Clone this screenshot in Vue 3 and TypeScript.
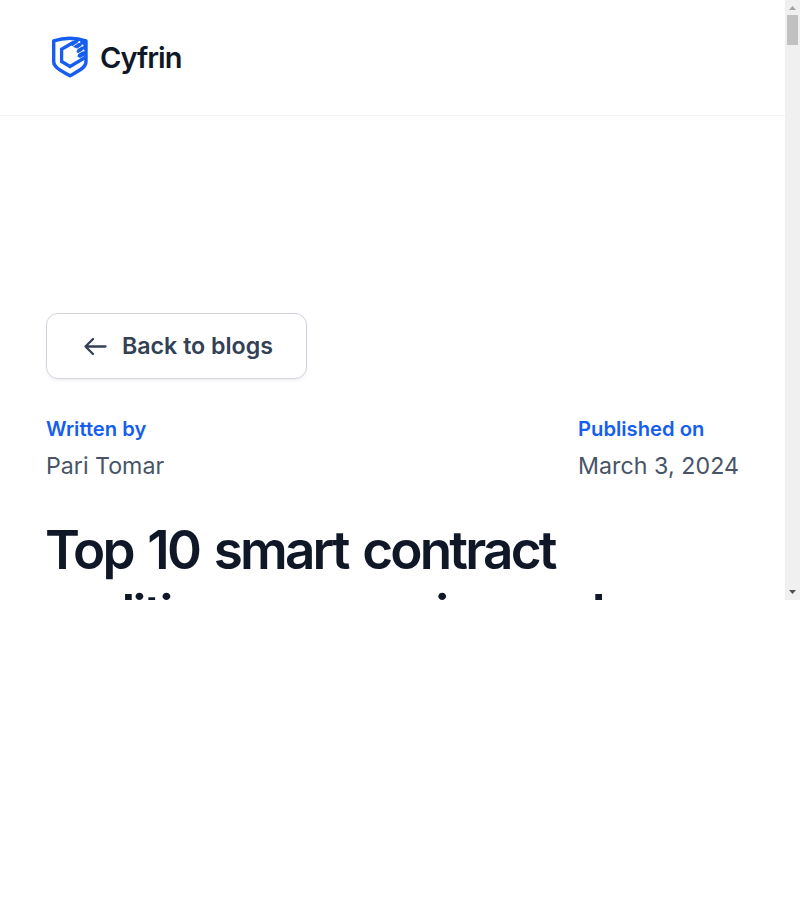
<script setup lang="ts">
interface Meta {
  label: string
  value: string
}

const author: Meta = { label: 'Written by', value: 'Pari Tomar' }
const published: Meta = { label: 'Published on', value: 'March 3, 2024' }
</script>

<template>
  <div class="viewport">
    <div class="page">
      <header class="header">
        <a class="brand">
          <svg class="shield" width="36" height="42" viewBox="0 0 36 42" fill="none">
            <path d="M1.7 4.8Q18 -.4 34 4.8V25.5C34 31.5 28 34 18 39.8C8 34 1.7 31.5 1.7 25.5Z" stroke="#155eef" stroke-width="3.4" stroke-linejoin="round" />
            <path d="M22 6L9.6 13.3V25.5L18 30.5L34 21" stroke="#155eef" stroke-width="3.3" />
            <path d="M17.5 8L25 2.5L35 4V18.2L28 22L25.3 20.5L26.5 17.5L24.5 16L25.5 12.7L21.5 11Z" fill="#155eef" />
            <path d="M19.5 11.2L27.3 6M24 13.8L30.5 9.6M25 18.2L31.5 14.5" stroke="#fff" stroke-width="0.9" />
            <circle cx="27.3" cy="6" r="1.1" fill="#fff" />
            <circle cx="30.5" cy="9.6" r="1.1" fill="#fff" />
            <circle cx="31.5" cy="14.5" r="1" fill="#fff" />
          </svg>
          <span class="brand-name">Cyfrin</span>
        </a>
      </header>
      <main class="content">
        <a class="back">
          <svg width="24" height="20" viewBox="0 0 24 20" fill="none">
            <path d="M22.5 10.5H2.5M10 3L2.5 10.5L10 18" stroke="#344054" stroke-width="2.3" stroke-linecap="round" stroke-linejoin="round" />
          </svg>
          <span>Back to blogs</span>
        </a>
        <div class="meta">
          <div class="meta-item">
            <span class="label">{{ author.label }}</span>
            <span class="value">{{ author.value }}</span>
          </div>
          <div class="meta-item">
            <span class="label">{{ published.label }}</span>
            <span class="value date">{{ published.value }}</span>
          </div>
        </div>
        <h1 class="title">
          <span class="line first">Top 10 smart contract</span>
          <span class="line second">auditing companies and</span>
        </h1>
      </main>
    </div>
    <div class="scrollbar">
      <svg class="up" width="15" height="15"><path d="M4 10L7.5 6L11 10Z" fill="#a3a3a3" /></svg>
      <div class="thumb"></div>
      <svg class="down" width="15" height="15"><path d="M4 5L7.5 9L11 5Z" fill="#505050" /></svg>
    </div>
  </div>
</template>

<style>
body {
  margin: 0;
  background: #fff;
}
</style>

<style scoped>
.viewport {
  display: flex;
  width: 800px;
  height: 600px;
  overflow: hidden;
  font-family: Inter, sans-serif;
}
.page {
  width: 785px;
  overflow: hidden;
}
.header {
  box-sizing: border-box;
  height: 116px;
  padding: 36px 0 0 52px;
  border-bottom: 1px solid #f2f4f7;
}
.brand {
  display: flex;
  height: 42px;
  gap: 12px;
}
.shield {
  flex: none;
}
.brand-name {
  font-size: 29px;
  line-height: 44px;
  font-weight: 600;
  letter-spacing: -1px;
  color: #101828;
}
.content {
  padding: 197px 46px 0;
}
.back {
  display: flex;
  align-items: center;
  box-sizing: border-box;
  width: 261px;
  height: 66px;
  padding-left: 36px;
  gap: 15px;
  border: 1px solid #d0d5dd;
  border-radius: 12px;
  box-shadow: 0 1.5px 3px rgba(16, 24, 40, 0.06);
  font-size: 23.2px;
  font-weight: 600;
  color: #344054;
  white-space: nowrap;
}
.meta {
  display: flex;
  justify-content: space-between;
  margin-top: 35px;
}
.meta-item {
  display: flex;
  flex-direction: column;
  gap: 5px;
  white-space: nowrap;
}
.label {
  font-size: 20.2px;
  line-height: 30px;
  font-weight: 600;
  color: #155eef;
}
.value {
  font-size: 23.2px;
  line-height: 35px;
  color: #475467;
}
.date {
  letter-spacing: 0.05px;
}
.title {
  margin: 33px 0 0 -1px;
  color: #101828;
  font-size: 53px;
  line-height: 66px;
  font-weight: 600;
}
.line {
  display: block;
  white-space: nowrap;
}
.first {
  letter-spacing: -2.8px;
  word-spacing: 4px;
}
.second {
  margin-top: -2px;
  letter-spacing: -2.8px;
  word-spacing: 3.5px;
}
.scrollbar {
  display: flex;
  flex-direction: column;
  width: 15px;
  background: #f0f0f0;
}
.scrollbar svg {
  display: block;
  flex: none;
}
.thumb {
  width: 11px;
  height: 30px;
  margin-left: 2px;
  background: #c1c1c1;
}
.down {
  margin-top: auto;
}
</style>
